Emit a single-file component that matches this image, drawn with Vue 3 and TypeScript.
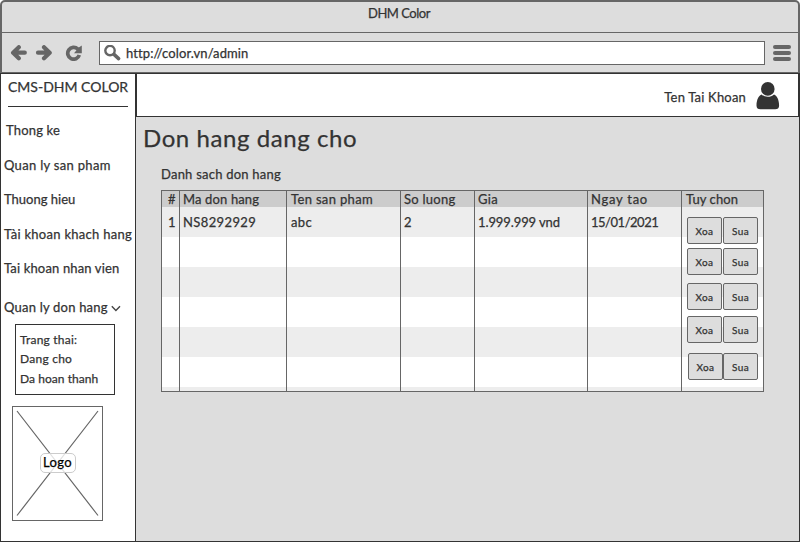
<script setup lang="ts">
interface Label {
  text: string
  tracking: number
}
interface Column {
  key: string
  head: Label
  value?: Label
}

const navItems: Label[] = [
  { text: 'Thong ke', tracking: 0.17 },
  { text: 'Quan ly san pham', tracking: 0.31 },
  { text: 'Thuong hieu', tracking: 0 },
  { text: 'Tài khoan khach hang', tracking: 0.28 },
  { text: 'Tai khoan nhan vien', tracking: 0.15 },
]

const statusItems: Label[] = [
  { text: 'Trang thai:', tracking: 0.22 },
  { text: 'Dang cho', tracking: 0.25 },
  { text: 'Da hoan thanh', tracking: 0.05 },
]

const columns: Column[] = [
  { key: 'index', head: { text: '#', tracking: 0 }, value: { text: '1', tracking: 0 } },
  { key: 'code', head: { text: 'Ma don hang', tracking: 0.14 }, value: { text: 'NS8292929', tracking: 0.38 } },
  { key: 'product', head: { text: 'Ten san pham', tracking: 0.34 }, value: { text: 'abc', tracking: 0.4 } },
  { key: 'amount', head: { text: 'So luong', tracking: 0.25 }, value: { text: '2', tracking: 0 } },
  { key: 'price', head: { text: 'Gia', tracking: 0.3 }, value: { text: '1.999.999 vnd', tracking: -0.1 } },
  { key: 'date', head: { text: 'Ngay tao', tracking: 0.75 }, value: { text: '15/01/2021', tracking: -0.48 } },
  { key: 'actions', head: { text: 'Tuy chon', tracking: 0.08 } },
]

const actionRows: number[] = [1, 2, 3, 4, 5]

const track = (label: Label) => ({ letterSpacing: `${label.tracking}px` })
</script>

<template>
  <div class="window">
    <header class="chrome">
      <div class="titlebar">DHM Color</div>
      <div class="toolbar">
        <svg class="arrow" width="18" height="16" viewBox="0 0 18 16">
          <path d="M8.8 2.2 L3.1 7.7 L8.8 13.2 M3.5 7.7 H14.8" />
        </svg>
        <svg class="arrow forward" width="18" height="16" viewBox="0 0 18 16">
          <path d="M9 2.2 L14.7 7.7 L9 13.2 M14.5 7.7 H3" />
        </svg>
        <svg class="reload" width="18" height="16" viewBox="0 0 18 16">
          <path class="ring" d="M12.8 4.1 A5.9 5.9 0 1 0 14.3 10" />
          <path class="tip" d="M16.8 0.6 V8.2 H9 L11.3 5.6 L12.6 3.2 Z" />
        </svg>
        <div class="address">
          <svg width="17" height="16" viewBox="0 0 17 16">
            <circle cx="6" cy="5.6" r="4.7" />
            <path d="M10 9.4 L14.6 13.6" />
          </svg>
          <span>http://color.vn/admin</span>
        </div>
        <div class="menu"><i></i><i></i><i></i></div>
      </div>
    </header>

    <div class="body">
      <aside class="sidebar">
        <div class="brand">CMS-DHM COLOR</div>
        <nav class="nav">
          <a v-for="item in navItems" :key="item.text" :style="track(item)">{{ item.text }}</a>
          <a class="expand">
            <span>Quan ly don hang</span>
            <svg width="10" height="7" viewBox="0 0 10 7"><path d="M0.8 1.3 L4.9 5.4 L9 1.3" /></svg>
          </a>
        </nav>
        <div class="statuses">
          <span v-for="item in statusItems" :key="item.text" :style="track(item)">{{ item.text }}</span>
        </div>
        <div class="logo">
          <svg width="89" height="113" viewBox="0 0 89 113">
            <path d="M4 4 L85 108.5 M85 4 L4 108.5" />
          </svg>
          <span>Logo</span>
        </div>
      </aside>

      <div class="content">
        <div class="account">
          <span>Ten Tai Khoan</span>
          <svg width="24" height="28" viewBox="0 0 24 28">
            <path
              d="M5.6 12.4 C3 13 0.5 17.5 0.5 23.4 C0.5 26 2 27.2 4.4 27.2 H19.2 C21.6 27.2 23.1 26 23.1 23.4 C23.1 17.5 20.6 13 18 12.4 C14.8 15.5 8.8 15.5 5.6 12.4 Z"
            />
            <circle cx="11.8" cy="6.9" r="6.8" />
          </svg>
        </div>
        <main class="main">
          <h1>Don hang dang cho</h1>
          <h2>Danh sach don hang</h2>
          <div class="table">
            <div v-for="column in columns" :key="column.key" class="column" :class="column.key">
              <div class="head" :style="track(column.head)">{{ column.head.text }}</div>
              <div v-if="column.value" class="cell" :style="track(column.value)">{{ column.value.text }}</div>
              <div v-else class="buttons">
                <div v-for="row in actionRows" :key="row" class="pair">
                  <button>Xoa</button>
                  <button>Sua</button>
                </div>
              </div>
            </div>
          </div>
        </main>
      </div>
    </div>
  </div>
</template>

<style>
body {
  background: #fff;
}
</style>

<style scoped>
* {
  box-sizing: border-box;
}
.window {
  display: flex;
  flex-direction: column;
  width: 800px;
  height: 542px;
  overflow: hidden;
  font: 13px/16px Lato, 'Liberation Sans', sans-serif;
  color: #333;
  white-space: nowrap;
  -webkit-text-stroke: 0.25px currentColor;
}
.chrome {
  flex: none;
  height: 73px;
  background: #ddd;
  border: 2px solid #666;
  border-bottom-width: 1px;
  border-radius: 5px 5px 0 0;
}
.titlebar {
  height: 31px;
  padding: 3px 2px 0 0;
  border-bottom: 1px solid #666;
  text-align: center;
  letter-spacing: -0.48px;
}
.toolbar {
  display: flex;
  align-items: center;
  height: 39px;
  padding: 0 7px 0 8px;
}
.toolbar svg {
  flex: none;
  fill: none;
  stroke: #666;
}
.arrow {
  stroke-width: 4.2;
  stroke-linecap: round;
  stroke-linejoin: round;
}
.forward {
  margin-left: 7px;
}
.reload {
  margin-left: 12px;
}
.ring {
  stroke-width: 3.7;
}
.reload .tip {
  fill: #666;
  stroke: none;
}
.address {
  display: flex;
  align-items: center;
  gap: 5px;
  width: 666px;
  height: 24px;
  margin-left: 16px;
  padding-left: 4px;
  background: #fff;
  border: 1px solid #666;
  letter-spacing: 0.11px;
}
.address circle {
  stroke-width: 2.4;
}
.address path {
  stroke-width: 3.5;
  stroke-linecap: round;
}
.menu {
  display: flex;
  flex-direction: column;
  gap: 2px;
  width: 18px;
  margin-left: auto;
}
.menu i {
  height: 4px;
  border-radius: 2px;
  background: #666;
}
.body {
  flex: 1;
  display: flex;
  min-height: 0;
  border: 1px solid #333;
}
.sidebar {
  flex: none;
  display: flex;
  flex-direction: column;
  width: 135px;
  background: #fff;
  border-right: 1px solid #333;
}
.brand {
  width: 120px;
  height: 33px;
  margin-left: 7px;
  padding-top: 5px;
  border-bottom: 1px solid #333;
  font-size: 14px;
  letter-spacing: 0;
}
.nav {
  display: flex;
  flex-direction: column;
  gap: 18.6px;
  padding: 15px 0 0 3px;
}
.nav a:first-child {
  padding-left: 2px;
}
.nav .expand {
  display: flex;
  align-items: center;
  gap: 3px;
  margin-top: 4px;
  letter-spacing: 0.21px;
}
.expand svg {
  margin-top: 3px;
  fill: none;
  stroke: #444;
  stroke-width: 1.4;
}
.statuses {
  display: flex;
  flex-direction: column;
  gap: 3.5px;
  width: 100px;
  height: 71px;
  margin: 9px 0 0 14px;
  padding: 7px 0 0 4px;
  border: 1px solid #333;
  font-size: 12px;
}
.logo {
  display: grid;
  place-items: center;
  width: 91px;
  height: 115px;
  margin: 11px 0 0 11px;
  border: 1px solid #666;
}
.logo > * {
  grid-area: 1 / 1;
}
.logo svg {
  fill: none;
  stroke: #666;
  stroke-width: 1.2;
}
.logo span {
  z-index: 1;
  width: 36px;
  height: 20px;
  border: 1px solid #ccc;
  border-radius: 5px;
  background: rgba(255, 255, 255, 0.8);
  color: #000;
  font-size: 13px;
  line-height: 17px;
  letter-spacing: 0.35px;
  text-align: center;
}
.content {
  flex: 1;
  display: flex;
  flex-direction: column;
  background: #ddd;
}
.account {
  display: flex;
  align-items: center;
  justify-content: flex-end;
  gap: 10px;
  height: 43px;
  padding: 2px 18px 0 0;
  background: #fff;
  border: 1px solid #333;
  border-top: 0;
  letter-spacing: 0.19px;
}
.account span {
  padding-top: 2px;
}
.account svg {
  fill: #333;
}
.main {
  padding-left: 8px;
}
h1 {
  margin: 5px 0 0 -1px;
  font-size: 24px;
  font-weight: 400;
  line-height: 32px;
  letter-spacing: 0.58px;
}
h2 {
  margin: 12px 0 0 17px;
  font-size: 13px;
  font-weight: 400;
  line-height: 16px;
  letter-spacing: 0.23px;
}
.table {
  display: grid;
  grid-template-columns: 18px 107px 114px 74px 113px 94px 81px;
  width: 603px;
  height: 202px;
  margin: 8px 0 0 17px;
  border: 1px solid #666;
  background: linear-gradient(#ccc 16px, transparent 16px),
    repeating-linear-gradient(#ededed 0 30px, #fff 30px 60px) 0 16px;
}
.column {
  padding-left: 3px;
  border-right: 1px solid #666;
}
.column.index {
  padding-left: 6px;
}
.column.product {
  padding-left: 4px;
}
.column.actions {
  padding-left: 4px;
  border-right: 0;
}
.head {
  height: 16px;
  line-height: 17px;
}
.cell {
  line-height: 31px;
}
.buttons {
  display: flex;
  flex-direction: column;
  padding: 10px 0 0 1px;
}
.pair {
  display: flex;
  gap: 1px;
  margin-bottom: 4px;
}
.pair:nth-child(2) {
  margin-bottom: 8px;
}
.pair:nth-child(3) {
  margin-bottom: 6px;
}
.pair:nth-child(4) {
  margin-bottom: 10px;
}
.pair:nth-child(5) {
  gap: 0;
  padding-left: 1px;
}
button {
  width: 35px;
  height: 27px;
  padding: 0;
  border: 1px solid #666;
  border-radius: 2px;
  background: #ddd;
  color: #333;
  font: 10px/12px Lato, 'Liberation Sans', sans-serif;
  letter-spacing: 0.4px;
  -webkit-text-stroke: 0.25px currentColor;
}
</style>
